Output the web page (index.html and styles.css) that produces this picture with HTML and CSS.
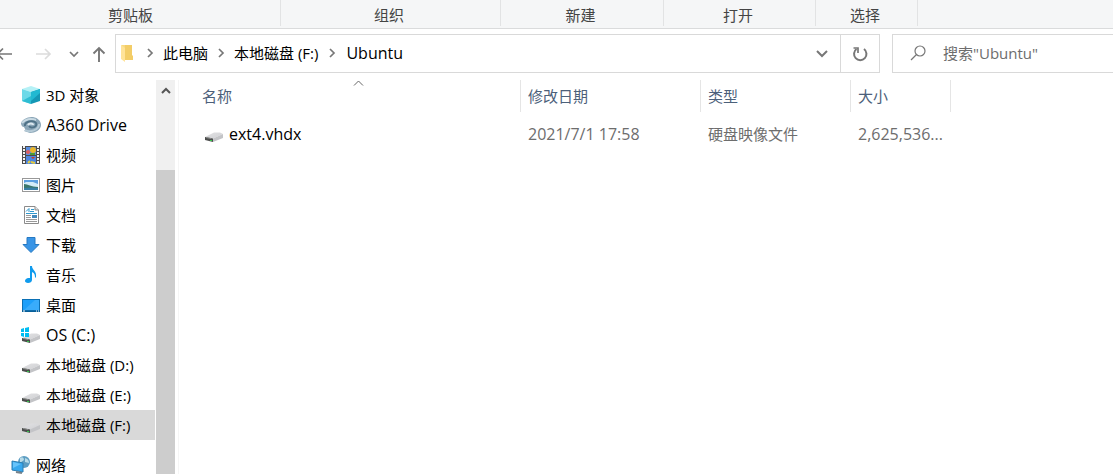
FILE: index.html
```
<!DOCTYPE html>
<html lang="zh-Hans">
<head>
  <meta charset="UTF-8" />
  <meta name="viewport" content="width=device-width, initial-scale=1" />
  <title>Ubuntu</title>
  <link rel="stylesheet" href="styles.css">
</head>
<body>
  <svg class="defs" aria-hidden="true">
    <linearGradient id="driveTop" x1="0" y1="0" x2="1" y2="1">
      <stop offset="0" stop-color="#e2e2e4" /><stop offset="1" stop-color="#cfd0d3" />
    </linearGradient>
    <symbol id="drive" viewBox="0 0 20 20">
      <path d="M1 13 L10 8.500 H16 L19 10 L9 14.500 Z" fill="url(#driveTop)" />
      <path d="M9 14.500 L19 10 V14 L9 18 Z" fill="#c3c4c7" />
      <path d="M1 13 L9 14.500 V18 L1 16 Z" fill="#4b4d4c" />
      <path d="M2 13.500 L7 14.500" stroke="#8b8d8c" />
      <path d="M6 16.500 H8" stroke="#35c84a" />
    </symbol>
    <symbol id="chevron" viewBox="0 0 8 10">
      <path d="M2 1 L6 5 L2 9" fill="none" stroke="#777" stroke-width="1.7" />
    </symbol>
  </svg>

  <div class="ribbon">
    <span class="group clipboard">剪贴板</span>
    <span class="group organize">组织</span>
    <span class="group new">新建</span>
    <span class="group open">打开</span>
    <span class="group select">选择</span>
  </div>

  <div class="toolbar">
    <button class="nav" title="后退"><svg width="18" height="14" viewBox="0 0 18 14"><path d="M17 7 H2 M8 1.5 L2.5 7 L8 12.5" fill="none" stroke="#777" stroke-width="1.7" /></svg></button>
    <button class="nav" title="前进"><svg width="18" height="14" viewBox="0 0 18 14"><path d="M1 7 H15 M10 2 L15 7 L10 12" fill="none" stroke="#dcdcdc" stroke-width="1.7" /></svg></button>
    <button class="nav recent" title="最近浏览的位置"><svg width="10" height="8" viewBox="0 0 10 8"><path d="M1 2 L5 6 L9 2" fill="none" stroke="#777" stroke-width="1.7" /></svg></button>
    <button class="nav up" title="上移"><svg width="14" height="16" viewBox="0 0 14 16"><path d="M7 16 V2 M1.5 7.5 L7 2 L12.5 7.5" fill="none" stroke="#777" stroke-width="1.9" /></svg></button>

    <div class="address">
      <svg class="folder" width="14" height="18" viewBox="0 0 14 18">
        <path d="M4 1 H12 V11 L13 12 V16 H4 Z" fill="#f3cd67" />
        <path d="M1 1 L5 3 V18 L1 15 Z" fill="#ffe398" />
        <path d="M1 1 H5 V4 Z" fill="#f8d980" />
      </svg>
      <svg class="sep" width="8" height="10"><use href="#chevron" /></svg>
      <a href="#">此电脑</a>
      <svg class="sep" width="8" height="10"><use href="#chevron" /></svg>
      <a href="#">本地磁盘 (F:)</a>
      <svg class="sep" width="8" height="10"><use href="#chevron" /></svg>
      <a href="#" class="latin">Ubuntu</a>
      <button class="history" title="以前的位置"><svg width="12" height="8" viewBox="0 0 12 8"><path d="M1 1 L6 6 L11 1" fill="none" stroke="#777" stroke-width="2" /></svg></button>
      <button class="refresh" title="刷新"><svg width="16" height="16" viewBox="0 0 16 16"><path d="M4.500 3 A6.200 6.200 0 1 0 12 3" fill="none" stroke="#777" stroke-width="2" /><path d="M1.500 2 H6 V7" fill="none" stroke="#777" stroke-width="1.7" /></svg></button>
    </div>

    <label class="search">
      <svg width="16" height="16" viewBox="0 0 16 16"><circle cx="10" cy="6" r="5" fill="none" stroke="#777" stroke-width="1.2" /><path d="M6.5 9.5 L1 15" stroke="#777" stroke-width="1.2" /></svg>
      <input type="text" placeholder="搜索&quot;Ubuntu&quot;" aria-label="搜索">
    </label>
  </div>

  <div class="main">
    <nav class="tree">
      <a href="#">
        <svg viewBox="0 0 20 20"><path d="M10 1 L19 4 L10 7 L1 4 Z" fill="#b5f1f6" /><path d="M1 4 L10 7 V19 L1 16 Z" fill="#6cd9e8" /><path d="M10 7 L19 4 V16 L10 19 Z" fill="#1597b5" /><path d="M10 7 L19 4 V8 L10 16 Z" fill="#21b9d2" /><path d="M1 16 L10 11 V19 Z" fill="#2fbdd3" /></svg>
        3D 对象</a>
      <a href="#" class="latin">
        <svg viewBox="0 0 20 20"><path d="M0 8 C2 3 8 2 12 2 C17 3 20 6 20 10 C20 15 14 18 9 18 L3 16 C5 15 4 14 3 12 C1 12 0 10 0 8 Z" fill="#8ba6b8" /><path d="M1 8 C4 4 10 3 15 5" fill="none" stroke="#c9dae3" stroke-width="2" /><path d="M4 11 C3 6 13 5 15 8 C17 12 10 14 8 11" fill="none" stroke="#4f7287" stroke-width="2" /><path d="M7 10 C8 8 12 8 12 10" fill="none" stroke="#dce8ef" stroke-width="2" /><path d="M4 15 C9 18 18 15 18 9" fill="none" stroke="#b5cad6" stroke-width="2" /></svg>
        A360 Drive</a>
      <a href="#">
        <svg viewBox="0 0 20 20"><rect x="1" y="1" width="18" height="18" fill="#4b4b4b" /><path d="M3 1 V19 M17 1 V19" stroke="#f2f2f2" stroke-width="2" stroke-dasharray="2 1" /><rect x="5" y="2" width="10" height="8" fill="#5a8ee0" /><rect x="5" y="11" width="10" height="8" fill="#4d85df" /><circle cx="12" cy="5" r="3" fill="#eab629" /><circle cx="7" cy="7" r="2" fill="#df5d5d" /><path d="M9 9 H14" stroke="#4c9b36" stroke-width="2" /><path d="M10 12 H14 L12 14 Z" fill="#c73b24" /><path d="M7 18 L9 16 M10 17 L14 18" stroke="#e6cc3d" stroke-width="2" /></svg>
        视频</a>
      <a href="#">
        <svg viewBox="0 0 20 20"><rect x="1.5" y="3.5" width="17" height="13" fill="#fff" stroke="#989898" /><rect x="3" y="5" width="14" height="10" fill="#5b9fe0" /><path d="M5 7 H12 L17 9 V12 H3 V8 Z" fill="#d3ecf8" /><path d="M3 9 C7 9 10 12 17 12 V15 H3 Z" fill="#3c786c" /><path d="M3 13 Q11 12 17 13 V15 H3 Z" fill="#397fa6" /></svg>
        图片</a>
      <a href="#">
        <svg viewBox="0 0 20 20"><path d="M3.500 1.500 H14 L17.500 5 V18.500 H3.500 Z" fill="#fff" stroke="#8b8b8b" /><path d="M14 1.500 V5 H17.500" fill="#e4e4e4" stroke="#8b8b8b" /><path d="M5 6.500 L8 3.500 V7 M10 4.500 H13 M9 6.500 H13 M5 8.500 H16" fill="none" stroke="#3098cd" /><path d="M5 10.500 H10 M5 12.500 H10 M5 14.500 H16 M5 16.500 H16" stroke="#999" /><rect x="11" y="10" width="5" height="3" fill="#4589ba" /></svg>
        文档</a>
      <a href="#">
        <svg viewBox="0 0 20 20"><path d="M6 2.500 H14 V9.500 H18 L10 17.500 L2 9.500 H6 Z" fill="#3995e6" stroke="#2679c2" /></svg>
        下载</a>
      <a href="#">
        <svg viewBox="0 0 20 20"><path d="M9 1 H11 C11 5 16 6 15 12 L14 13 C14 9 13 8 11 7 V15 C11 17 9 18 7 18 C3 18 3 14 7 13 H9 Z" fill="#109bed" /></svg>
        音乐</a>
      <a href="#">
        <svg viewBox="0 0 20 20"><rect x="1.500" y="4.500" width="17" height="12" fill="#1c9ffa" stroke="#0b70b5" /><path d="M2 16 L14 5 H18 V15 Z" fill="#39acfb" /><path d="M1 16 H19" stroke="#07598f" stroke-width="1.500" /><path d="M2 16 H4 M15 16 H16 M17 16 H18" stroke="#fff" /></svg>
        桌面</a>
      <a href="#" class="latin">
        <svg viewBox="0 0 20 20"><use href="#drive" width="20" height="20" /><path d="M0 4 L3 3 V7 H0 Z M4 3 L8 2 V7 H4 Z M0 8 H3 V12 L0 11 Z M4 8 H8 V12 H4 Z" fill="#00bdf2" /></svg>
        OS (C:)</a>
      <a href="#"><svg><use href="#drive" /></svg>本地磁盘 (D:)</a>
      <a href="#"><svg><use href="#drive" /></svg>本地磁盘 (E:)</a>
      <a href="#" class="current"><svg><use href="#drive" /></svg>本地磁盘 (F:)</a>
      <a href="#" class="network">
        <svg viewBox="0 0 20 20"><circle cx="13" cy="7" r="6" fill="#5d9dc2" /><path d="M9 3 Q13 1 13 5 L9 8 Z M14 3 Q18 4 18 8 L14 7 Z" fill="#b8dbe8" /><path d="M1 6 L12 8 V17 L1 15 Z" fill="#37a8ee" stroke="#2a7db2" /><path d="M2 7 L10 9 L2 13 Z" fill="#67c4fb" /><path d="M5 17 L11 18" stroke="#78828a" stroke-width="2" /></svg>
        网络</a>
    </nav>

    <div class="scrollbar">
      <button class="scroll-up" title="向上滚动"><svg width="10" height="8" viewBox="0 0 10 8"><path d="M1 6 L5 2 L9 6" fill="none" stroke="#555" stroke-width="2" /></svg></button>
      <div class="thumb"></div>
    </div>

    <div class="files">
      <table>
        <thead>
          <tr>
            <th class="name">名称<svg class="sort" width="11" height="6" viewBox="0 0 11 6"><path d="M1 5.500 L5.500 1 L10 5.500" fill="none" stroke="#666" /></svg></th>
            <th class="date">修改日期</th>
            <th class="type">类型</th>
            <th class="size">大小</th>
          </tr>
        </thead>
        <tbody>
          <tr>
            <td class="name latin"><a href="#"><svg><use href="#drive" /></svg>ext4.vhdx</a></td>
            <td class="latin">2021/7/1 17:58</td>
            <td>硬盘映像文件</td>
            <td class="latin">2,625,536...</td>
          </tr>
        </tbody>
      </table>
    </div>
  </div>
</body>
</html>
```
FILE: styles.css
```
* {
  box-sizing: border-box;
}
html, body {
  margin: 0;
  height: 100%;
  overflow: hidden;
}
body {
  display: flex;
  flex-direction: column;
  background: #fff;
  color: #000;
  font: 15px/20px "Open Sans", "Noto Sans CJK SC", sans-serif;
}
a {
  color: inherit;
  text-decoration: none;
}
button {
  display: flex;
  align-items: center;
  justify-content: center;
  padding: 0;
  border: none;
  background: none;
}
svg {
  flex: none;
}
.latin {
  font-size: 16px;
}
.defs {
  position: absolute;
  width: 0;
  height: 0;
}

/* ribbon */
.ribbon {
  display: flex;
  flex: none;
  height: 29px;
  padding-bottom: 2px;
  background: #f5f6f7;
  border-bottom: 1px solid #dadbdc;
  color: #444;
}
.group {
  padding: 5px 3px 0 0;
  border-right: 1px solid #e2e3e4;
  text-align: center;
}
.clipboard {
  width: 281px;
  padding-right: 19px;
}
.organize {
  width: 220px;
}
.new {
  width: 163px;
}
.open {
  width: 152px;
}
.select {
  width: 102px;
}

/* navigation and address */
.toolbar {
  display: flex;
  flex: none;
  align-items: center;
  margin: 5px 0 7px -16px;
}
.nav {
  width: 40px;
  height: 39px;
}
.recent {
  width: 20px;
}
.up {
  width: 31px;
  padding-right: 2px;
}
.address {
  display: flex;
  flex: 1;
  align-items: center;
  height: 39px;
  padding: 0 0 2px 4px;
  border: 1px solid #d9d9d9;
  white-space: nowrap;
}
.sep {
  margin: 0 9px;
}
.folder + .sep {
  margin-left: 12px;
}
.sep:last-of-type {
  margin: 0 10px;
}
.history {
  width: 36px;
  height: 37px;
  margin: 2px 0 0 auto;
}
.refresh {
  width: 39px;
  height: 37px;
  margin-top: 2px;
  border-left: 1px solid #d9d9d9;
}
.search {
  display: flex;
  align-items: center;
  width: 221px;
  height: 39px;
  margin-left: 12px;
  padding: 0 0 2px 17px;
  border: 1px solid #d9d9d9;
  border-right: none;
}
.search input {
  flex: 1;
  min-width: 0;
  margin-left: 17px;
  padding: 0;
  border: none;
  outline: none;
  background: none;
  font: inherit;
}
.search input::placeholder {
  color: #6d6d6d;
  opacity: 1;
}

/* folder tree */
.main {
  display: flex;
  flex: 1;
  min-height: 0;
}
.tree {
  width: 155px;
  margin-right: 1px;
  overflow: hidden;
}
.tree a {
  display: flex;
  align-items: center;
  height: 30px;
  padding-left: 21px;
  white-space: nowrap;
}
.tree svg, td svg {
  width: 20px;
  height: 20px;
  margin-right: 5px;
}
.tree .current {
  background: #d9d9d9;
}
.tree .network {
  margin-top: 10px;
  padding-left: 11px;
}
.scrollbar {
  display: flex;
  flex-direction: column;
  width: 19px;
  background: #f0f0f0;
}
.scroll-up {
  height: 22px;
}
.thumb {
  flex: 1;
  margin-top: 68px;
  background: #cdcdcd;
}

/* file list */
.files {
  flex: 1;
  min-width: 0;
  margin-left: 3px;
  border-left: 1px solid #f5f5f5;
}
table {
  table-layout: fixed;
  width: 772px;
  border-collapse: separate;
  border-spacing: 0;
}
th, td {
  padding: 0 0 0 7px;
  text-align: left;
  white-space: nowrap;
}
th {
  height: 32px;
  border-right: 1px solid #e5e5e5;
  color: #4c607a;
  font-weight: normal;
}
td {
  height: 44px;
  color: #6d6d6d;
}
th.name {
  position: relative;
  width: 342px;
  padding-left: 23px;
}
.date {
  width: 180px;
}
.type {
  width: 150px;
}
.size {
  width: 100px;
}
.sort {
  position: absolute;
  top: 0;
  left: 51%;
}
td.name {
  padding-left: 25px;
  color: #000;
}
td a {
  display: flex;
  align-items: center;
}
```
